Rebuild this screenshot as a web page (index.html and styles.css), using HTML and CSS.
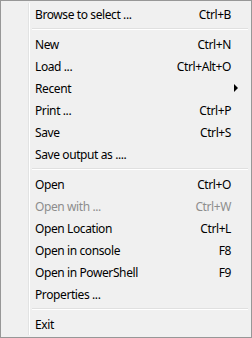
FILE: index.html
```html
<!DOCTYPE html>
<html lang="en">
<head>
    <meta charset="UTF-8">
    <title>File menu</title>
    <link rel="stylesheet" href="styles.css">
</head>
<body>
    <div class="menu">
        <div class="item"><span class="label">Browse to select ...</span><span class="key">Ctrl+B</span></div>
        <div class="sep"></div>
        <div class="item"><span class="label">New</span><span class="key">Ctrl+N</span></div>
        <div class="item"><span class="label">Load ...</span><span class="key">Ctrl+Alt+O</span></div>
        <div class="item"><span class="label">Recent</span><span class="arrow"></span></div>
        <div class="item"><span class="label">Print ...</span><span class="key">Ctrl+P</span></div>
        <div class="item"><span class="label">Save</span><span class="key">Ctrl+S</span></div>
        <div class="item"><span class="label">Save output as ....</span></div>
        <div class="sep"></div>
        <div class="item"><span class="label">Open</span><span class="key">Ctrl+O</span></div>
        <div class="item disabled"><span class="label">Open with ...</span><span class="key">Ctrl+W</span></div>
        <div class="item"><span class="label">Open Location</span><span class="key">Ctrl+L</span></div>
        <div class="item"><span class="label">Open in console</span><span class="key">F8</span></div>
        <div class="item"><span class="label">Open in PowerShell</span><span class="key">F9</span></div>
        <div class="item"><span class="label">Properties ...</span></div>
        <div class="sep"></div>
        <div class="item"><span class="label">Exit</span></div>
    </div>
</body>
</html>
```

FILE: styles.css
```css
* {
    margin: 0;
    padding: 0;
    box-sizing: border-box;
}

body {
    background: #f0f0f0;
    font-family: 'Noto Sans', sans-serif;
    font-size: 12px;
    letter-spacing: -0.4px;
    color: #000;
}

.menu {
    width: 252px;
    height: 338px;
    border: 1px solid #979797;
    padding: 2px;
    background: #f0f0f0 linear-gradient(to right, transparent 27px, #e2e3e3 27px, #e2e3e3 28px, #fff 28px, #fff 29px, transparent 29px);
    background-clip: content-box;
}

.item {
    display: flex;
    align-items: center;
    height: 22px;
    padding: 0 18px 0 32px;
}

.label {
    flex: 1;
}

.key {
    text-align: right;
}

.disabled {
    color: #8d8d8d;
}

.arrow {
    width: 0;
    height: 0;
    border-top: 4px solid transparent;
    border-bottom: 4px solid transparent;
    border-left: 4px solid #000;
    margin-right: -7px;
}

.sep {
    height: 8px;
    margin-left: 29px;
    margin-right: 1px;
    display: flex;
    flex-direction: column;
    justify-content: center;
}

.sep::before {
    content: "";
    display: block;
    height: 1px;
    background: #e0e0e0;
    border-bottom: 1px solid #fff;
    box-sizing: content-box;
}
```
